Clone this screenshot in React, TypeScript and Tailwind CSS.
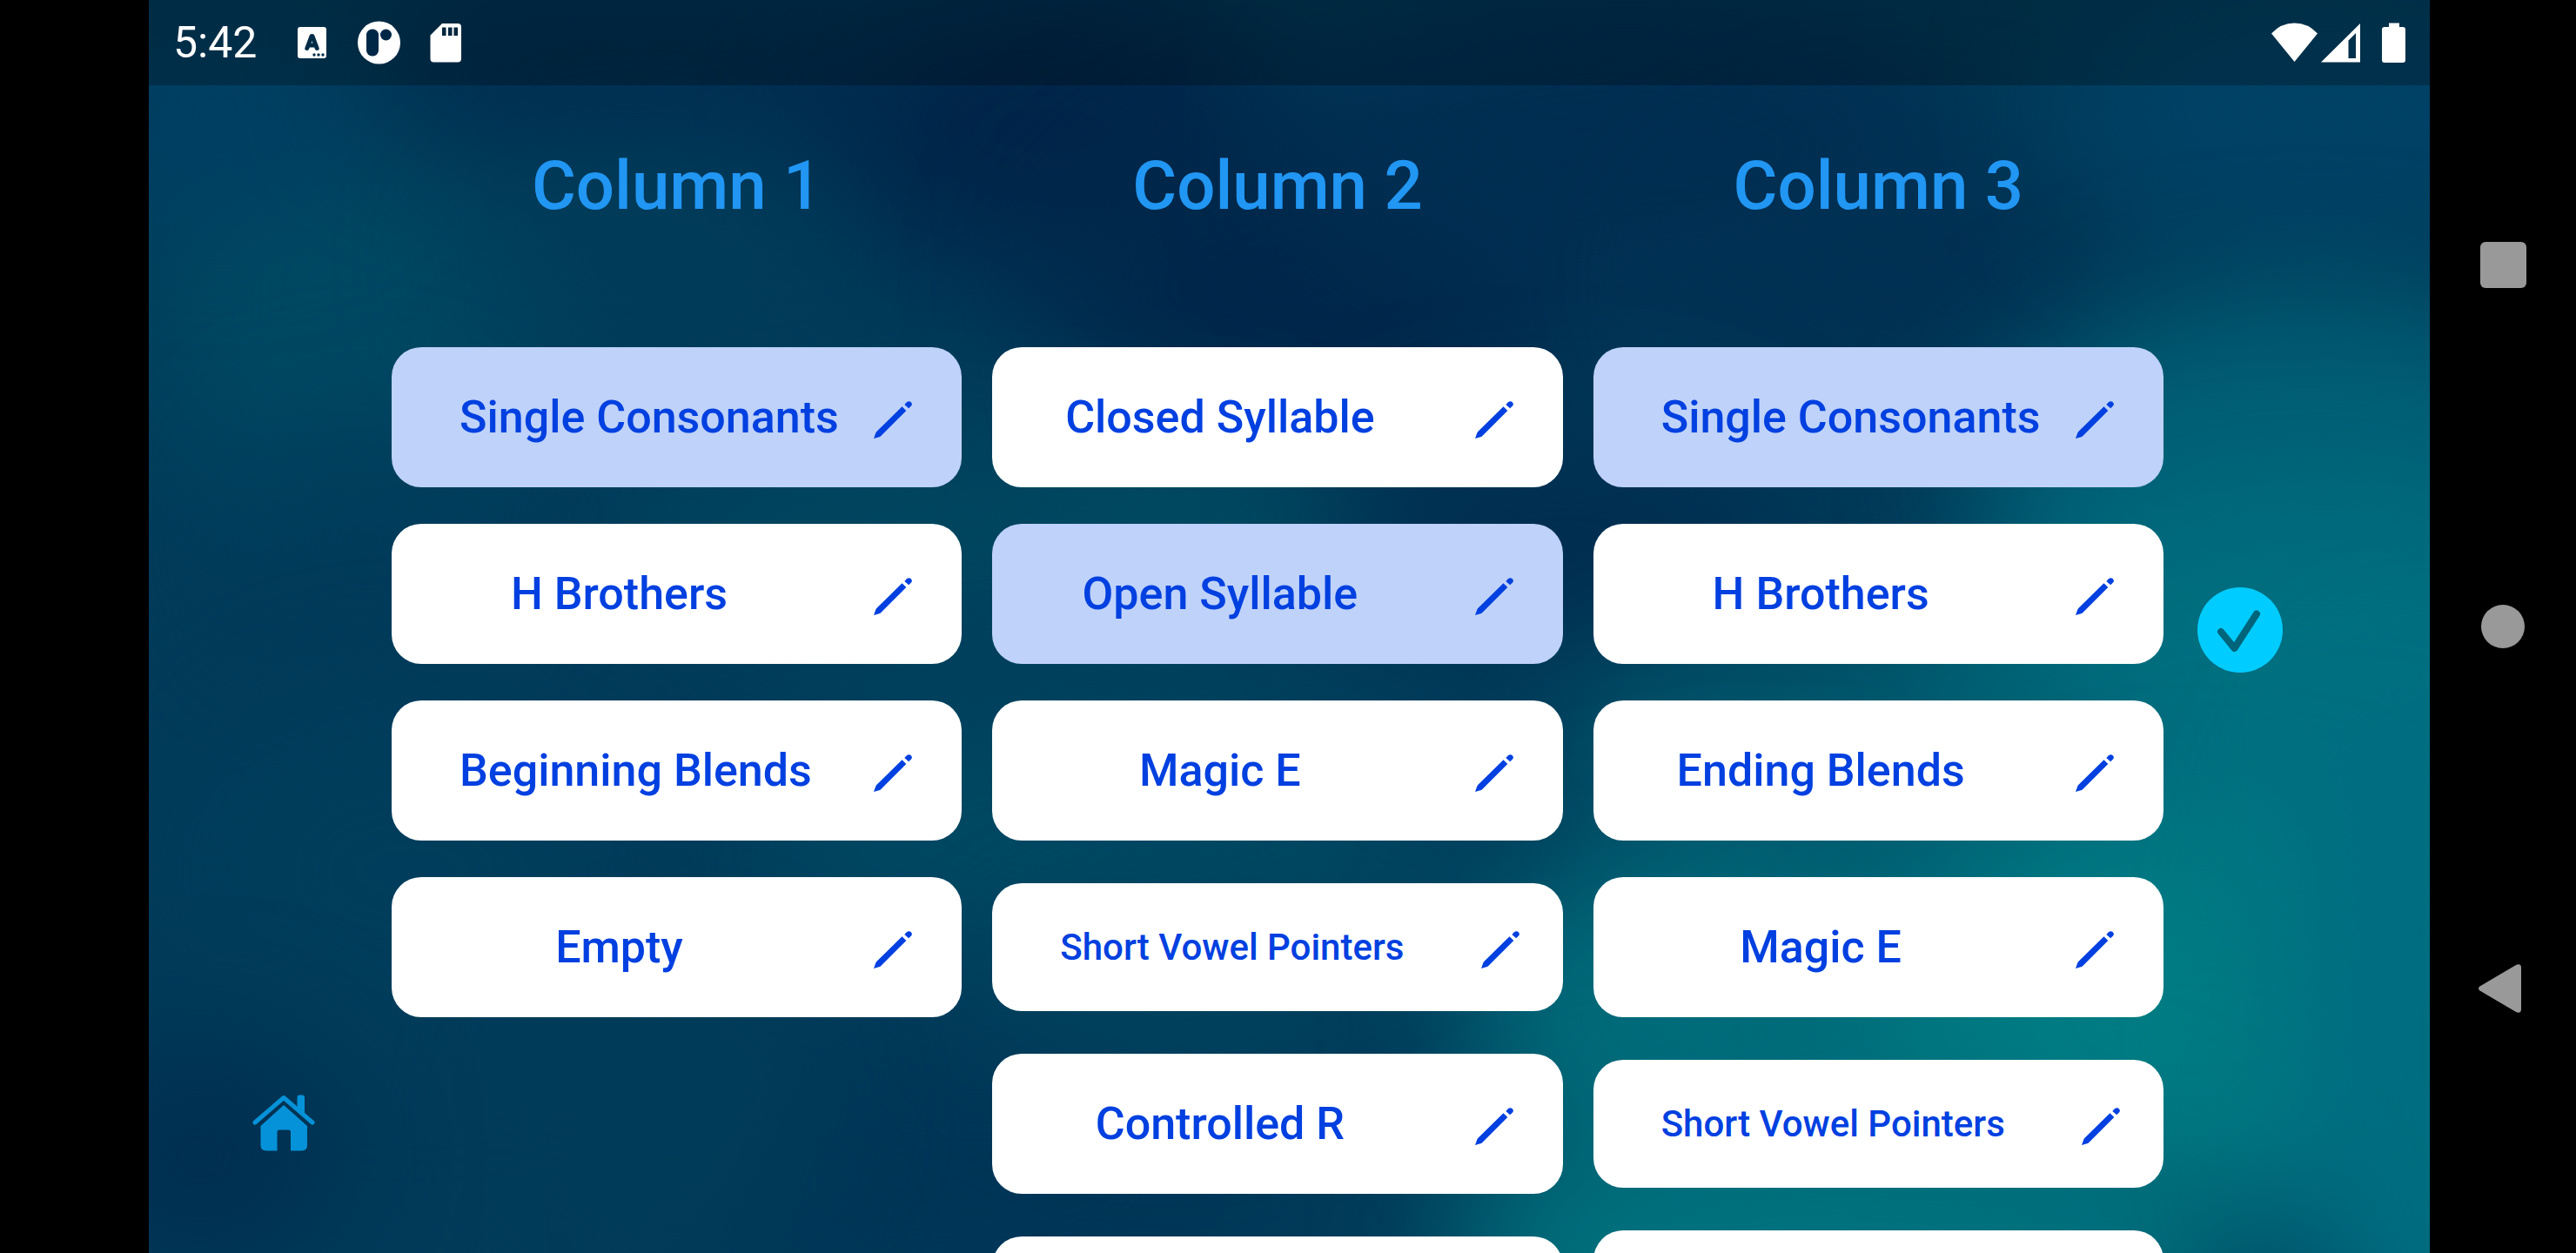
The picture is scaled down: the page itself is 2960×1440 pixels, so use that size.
type Card = { label: string; selected?: boolean; compact?: boolean };

const columns: { title: string; cards: Card[] }[] = [
  {
    title: "Column 1",
    cards: [
      { label: "Single Consonants", selected: true },
      { label: "H Brothers" },
      { label: "Beginning Blends" },
      { label: "Empty" },
    ],
  },
  {
    title: "Column 2",
    cards: [
      { label: "Closed Syllable" },
      { label: "Open Syllable", selected: true },
      { label: "Magic E" },
      { label: "Short Vowel Pointers", compact: true },
      { label: "Controlled R" },
      { label: "", compact: true },
    ],
  },
  {
    title: "Column 3",
    cards: [
      { label: "Single Consonants", selected: true },
      { label: "H Brothers" },
      { label: "Ending Blends" },
      { label: "Magic E" },
      { label: "Short Vowel Pointers", compact: true },
      { label: "" },
    ],
  },
];

/* Soft colour patches of the wallpaper: centre, radii, colour, opacity */
const patches: [number, number, number, number, string, number][] = [
  [230, 350, 230, 260, "#004a64", 0.9],
  [80, 130, 180, 110, "#003f63", 1],
  [560, 90, 330, 110, "#002c50", 0.9],
  [1040, 150, 260, 170, "#002347", 0.9],
  [1330, 330, 300, 190, "#00274a", 1],
  [560, 300, 200, 120, "#003d5a", 0.9],
  [1700, 170, 380, 180, "#002e52", 1],
  [2000, 320, 260, 150, "#003053", 0.9],
  [2500, 130, 300, 150, "#004266", 1],
  [950, 610, 420, 110, "#004860", 0.9],
  [1230, 590, 200, 80, "#004d62", 0.8],
  [1630, 620, 260, 120, "#002d50", 1],
  [250, 620, 160, 140, "#003a5a", 0.8],
  [1100, 960, 420, 160, "#004963", 0.9],
  [300, 1000, 260, 200, "#003e5c", 0.9],
  [60, 1330, 160, 130, "#002e50", 1],
  [950, 1360, 330, 150, "#003557", 1],
  [600, 1280, 170, 160, "#003d59", 0.8],
  [1180, 1150, 220, 100, "#00445f", 0.8],
  [2480, 560, 380, 220, "#006076", 1],
  [2500, 880, 500, 300, "#007080", 1],
  [1950, 860, 330, 130, "#005c70", 0.9],
  [1850, 1170, 340, 220, "#006b7a", 1],
  [2350, 1180, 360, 220, "#007c84", 1],
  [1950, 1440, 460, 170, "#00727e", 1],
  [2620, 1200, 180, 420, "#006d80", 1],
];

function Wallpaper() {
  return (
    <svg
      aria-hidden="true"
      viewBox="0 0 2621 1440"
      preserveAspectRatio="none"
      className="absolute inset-0 h-full w-full"
    >
      <defs>
        <filter id="soft" x="-100%" y="-100%" width="300%" height="300%" colorInterpolationFilters="sRGB">
          <feGaussianBlur stdDeviation="75" />
        </filter>
      </defs>
      <rect width="2621" height="1440" fill="#003b5a" />
      {patches.map(([cx, cy, rx, ry, fill, opacity], i) => (
        <ellipse key={i} cx={cx} cy={cy} rx={rx} ry={ry} fill={fill} opacity={opacity} filter="url(#soft)" />
      ))}
    </svg>
  );
}

function Pencil() {
  return (
    <svg viewBox="24 14 46 52" className="h-[52px] w-[46px]" fill="currentColor" aria-hidden="true">
      <path d="M25 64 27.3 57.6Q28 56 29 55.3L57.5 27.2 62.3 32 33.3 60.9Q32 62 31 62.2Z" />
      <path d="M60.3 25 63 22.2Q65 20.3 67.4 21.8 69.6 23.8 68.5 26L65.2 29.3Z" />
    </svg>
  );
}

function WordCard({ label, selected, compact }: Card) {
  return (
    <li className="flex h-[161px] items-center">
      <div
        className={`flex w-full items-center justify-between rounded-[34px] pl-[78px] text-[#0040e0] ${
          compact ? "h-[147px] pr-[49px]" : "h-[161px] pr-14"
        } ${selected ? "bg-[#bfd2f9]" : "bg-white"}`}
      >
        <button
          type="button"
          aria-label={label || "Card"}
          className={`min-w-[367px] text-center font-medium whitespace-nowrap ${
            compact ? "text-[42px] leading-[50px]" : "text-[52px] leading-[60px]"
          }`}
        >
          {label}
        </button>
        <button type="button" aria-label={`Edit ${label}`}>
          <Pencil />
        </button>
      </div>
    </li>
  );
}

function StatusBar() {
  return (
    <header className="relative flex h-[98px] items-center bg-black/25 pr-7 pl-7 text-white">
      <span className="text-[50px] leading-[60px]">5:42</span>
      <svg viewBox="0 0 190 50" className="ml-[46px] h-[50px] w-[190px]" fill="#fff" aria-hidden="true">
        <path d="M4 7H31Q34 7 34 10V40Q34 43 31 43H4Q1 43 1 40V10Q1 7 4 7Z" />
        <path d="M11.800 31.500 17 17.500H18L23.200 31.500M14 28H21" fill="none" stroke="#002c47" strokeWidth="5" strokeLinecap="round" strokeLinejoin="round" />
        <g fill="#002c47">
          <circle cx="20" cy="39" r="1.700" />
          <circle cx="25" cy="39" r="1.700" />
          <circle cx="30" cy="39" r="1.700" />
        </g>
        <circle cx="94.500" cy="25" r="24.500" />
        <rect x="80" y="9.500" width="14" height="31" rx="6.500" fill="#002846" />
        <circle cx="102.500" cy="16" r="6.500" fill="#002846" />
        <path
          fillRule="evenodd"
          d="M167 3H185Q189 3 189 7V43.500Q189 47.500 185 47.500H157.500Q153.500 47.500 153.500 43.500V16.500ZM167 7.500V17H171.500V7.500ZM174 7.500V17H178.500V7.500ZM180.500 7.500V17H185V7.500Z"
        />
      </svg>
      <svg viewBox="0 0 154 46" className="ml-auto h-[46px] w-[154px]" fill="#fff" aria-hidden="true">
        <path d="M0 12.500Q11 .5 26.500 .5T53 12.500L26.500 45Z" />
        <path fillRule="evenodd" d="M102 1V45.500H57ZM97 12 88.500 20.500V41H97Z" />
        <path d="M135 .5H147V5H151Q154 5 154 8V43Q154 46 151 46H130Q127 46 127 43V8Q127 5 130 5H135Z" />
      </svg>
    </header>
  );
}

function SystemNav() {
  return (
    <nav aria-label="System" className="flex w-[168px] shrink-0 flex-col items-center justify-center gap-80">
      <button type="button" aria-label="Recent apps" className="grid size-24 place-items-center">
        <span className="size-[53px] rounded-md bg-[#999999]" />
      </button>
      <button type="button" aria-label="Home screen" className="grid size-24 place-items-center">
        <span className="size-[50px] rounded-full bg-[#999999]" />
      </button>
      <button type="button" aria-label="Back" className="grid size-24 place-items-center">
        <svg viewBox="0 0 56 56" className="size-14" fill="#999" aria-hidden="true">
          <path d="M1.500 25.500 43.500 .8Q49 -1 49 4V52Q49 57 43.500 55.200L1.500 30.500Q-1.500 28 1.500 25.500Z" />
        </svg>
      </button>
    </nav>
  );
}

export default function App() {
  return (
    <div className="flex h-screen overflow-hidden bg-black pl-[171px] font-['Roboto',sans-serif]">
      <div className="relative flex min-w-0 flex-1 flex-col overflow-hidden">
        <Wallpaper />
        <StatusBar />
        <div className="relative flex min-h-0 flex-1">
          <aside className="flex w-[279px] shrink-0 items-end pb-[117px] pl-[119px]">
            <a href="#home" aria-label="Home">
              <svg viewBox="0 0 72 65" className="h-[65px] w-[72px]" aria-hidden="true">
                <path
                  d="M3 32 36 3.500 69 32"
                  fill="none"
                  stroke="#0692d8"
                  strokeWidth="5"
                  strokeLinecap="round"
                  strokeLinejoin="round"
                />
                <path d="M51.500 15V3Q51.500 .5 54 .5H57.500Q60 .5 60 3V23Z" fill="#0692d8" />
                <path
                  d="M36 12 63 36V58Q63 64.500 56.500 64.500H44V43Q44 40.500 41.500 40.500H31Q28.500 40.500 28.500 43V64.500H16Q9.500 64.500 9.500 58V36Z"
                  fill="#0692d8"
                />
              </svg>
            </a>
          </aside>
          <main className="grid flex-1 grid-cols-3 gap-[35px]">
            {columns.map((column) => (
              <section key={column.title} className="min-w-0 pt-[72px]">
                <h2 className="mb-[141px] text-center text-[78px] leading-[88px] font-medium text-[#2196f3]">
                  {column.title}
                </h2>
                <ul className="flex flex-col gap-[42px]">
                  {column.cards.map((card, i) => (
                    <WordCard key={i} {...card} />
                  ))}
                </ul>
              </section>
            ))}
          </main>
          <aside className="flex w-[306px] shrink-0 items-center pb-[90px] pl-[39px]">
            <button type="button" aria-label="Done">
              <svg viewBox="0 0 98 98" className="size-[98px]" aria-hidden="true">
                <circle cx="49" cy="49" r="49" fill="#00ccff" />
                <path
                  d="M27 51 42.500 70 68 30.500"
                  fill="none"
                  stroke="#00647a"
                  strokeWidth="8"
                  strokeLinecap="round"
                  strokeLinejoin="round"
                />
              </svg>
            </button>
          </aside>
        </div>
      </div>
      <SystemNav />
    </div>
  );
}
